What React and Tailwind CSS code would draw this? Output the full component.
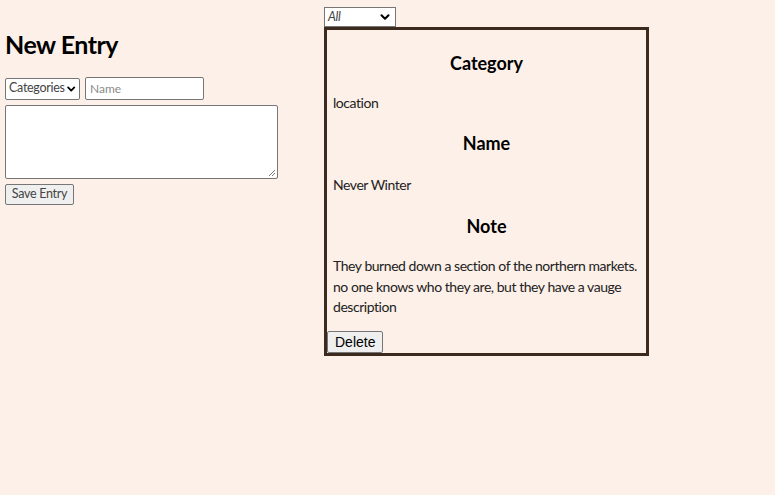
import { ChevronDown } from 'lucide-react';

const hand = { fontFamily: 'Lato, "Noto Sans", sans-serif' };

const entry = {
    category: 'location',
    name: 'Never Winter',
    note: 'They burned down a section of the northern markets. no one knows who they are, but they have a vauge description',
};

function FakeSelect({ label, className }) {
    return (
        <div className={`flex items-center justify-between bg-white border border-[#767676] text-[#444] ${className}`}>
            <span className="text-[12.5px] leading-none tracking-[-0.3px]">{label}</span>
            <ChevronDown className="w-3.5 h-3.5 text-black" strokeWidth={3.5} />
        </div>
    );
}

export default function App() {
    return (
        <div className="min-h-[495px] bg-[#fcf0e8] flex text-[#222]" style={hand}>
            {/* New entry form */}
            <div className="w-[324px] pl-[5px]">
                <h1 className="mt-[27px] text-[25px] leading-[34px] font-bold text-black tracking-[-0.5px]">New Entry</h1>
                <div className="mt-[16px] flex items-center gap-[5px]">
                    <FakeSelect label="Categories" className="w-[75px] h-[22px] rounded-[2px] pl-[3px] pr-[2px]" />
                    <div className="w-[119px] h-[23px] bg-white border border-[#767676] rounded-[2px] flex items-center pl-[4px]">
                        <span className="text-[12px] text-[#8a8a8a]">Name</span>
                    </div>
                </div>
                <div className="mt-[5px] w-[273px] h-[74px] bg-white border border-[#767676] rounded-[2px] relative">
                    <svg className="absolute right-[1px] bottom-[1px]" width="9" height="9" viewBox="0 0 9 9">
                        <path d="M8 2L2 8M8 5L5 8" stroke="#777" strokeWidth="1" />
                    </svg>
                </div>
                <button className="mt-[5px] w-[69px] h-[21px] bg-[#efefef] border border-[#767676] rounded-[2px] text-[12.5px] text-[#444] leading-none tracking-[-0.3px]">
                    Save Entry
                </button>
            </div>

            {/* Entries */}
            <div className="pt-[7px]">
                <FakeSelect label="All" className="w-[72px] h-[20px] pl-[3px] pr-[3px] italic" />
                <div className="w-[325px] border-[3px] border-[#3d2a1f] pt-[21px]">
                    <h3 className="text-center text-[18px] leading-[24px] font-bold text-black">Category</h3>
                    <p className="mt-[18px] px-[6px] text-[14px] leading-[20px] tracking-[-0.45px]">{entry.category}</p>
                    <h3 className="mt-[18px] text-center text-[18px] leading-[24px] font-bold text-black">Name</h3>
                    <p className="mt-[20px] px-[6px] text-[14px] leading-[20px] tracking-[-0.45px]">{entry.name}</p>
                    <h3 className="mt-[19px] text-center text-[18px] leading-[24px] font-bold text-black">Note</h3>
                    <p className="mt-[18px] pl-[6px] pr-[4px] text-[14px] leading-[20.5px] tracking-[-0.45px]">{entry.note}</p>
                    <button
                        className="mt-[13px] h-[22px] px-[7px] bg-[#efefef] border border-[#767676] rounded-[2px] text-[14px] leading-none text-black"
                        style={{ fontFamily: '"Liberation Sans", Arial, sans-serif' }}
                    >
                        Delete
                    </button>
                </div>
            </div>
        </div>
    );
}
